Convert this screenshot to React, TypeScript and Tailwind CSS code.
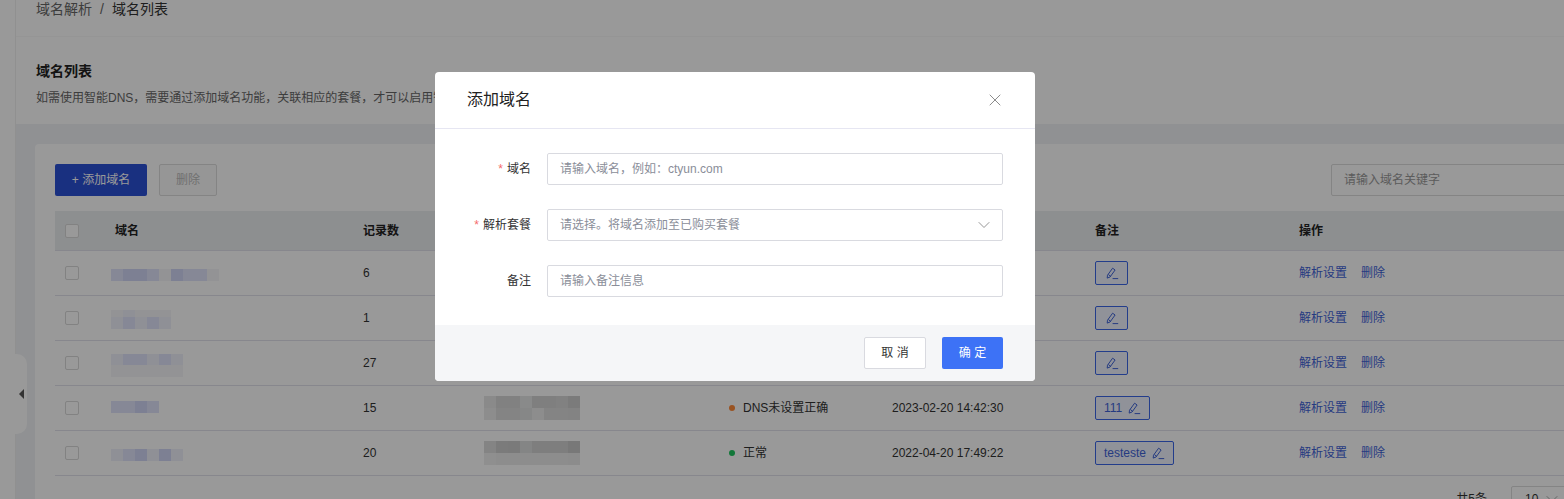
import { ChevronDown, X } from 'lucide-react';

interface Row {
  count: number;
  name: string[][];
  nameHeights: string[];
  nameOffset: string;
  pkg?: string[][];
  status?: { label: string; dot: string };
  time?: string;
  note?: string;
}

const L = '#eef0fa';
const M = '#dfe3fa';
const S = '#d0d6f5';
const P = '#f5f5f9';

const ROWS: Row[] = [
  {
    count: 6,
    name: [[M, S, S, M, P, S, M, M, P]],
    nameHeights: ['h-[12px]'],
    nameOffset: 'mt-[4px]',
  },
  {
    count: 1,
    name: [[P, L, P, P, P], [L, M, L, M, L]],
    nameHeights: ['h-[7px]', 'h-[12px]'],
    nameOffset: 'mt-[3px]',
  },
  {
    count: 27,
    name: [[L, M, M, L, M, L], [P, P, P, P, P, P]],
    nameHeights: ['h-[11px]', 'h-[12px]'],
    nameOffset: 'mt-[5px]',
  },
  {
    count: 15,
    name: [[M, M, S, M]],
    nameHeights: ['h-[12px]'],
    nameOffset: '-mt-[2px]',
    pkg: [
      ['#e6e6e6', '#d8d8d8', '#d8d8d8', '#e4e6e6', '#d4d4d4', '#d4d4d4', '#d8d8d8', '#cecece'],
      ['#ececec', '#dcdcdc', '#dcdcdc', '#dfe2e2', '#ebebeb', '#dcdcdc', '#dcdcdc', '#dadada'],
    ],
    status: { label: 'DNS未设置正确', dot: 'bg-[#ff8a3a]' },
    time: '2023-02-20 14:42:30',
    note: '111',
  },
  {
    count: 20,
    name: [[L, M, S, L, S, L]],
    nameHeights: ['h-[12px]'],
    nameOffset: 'mt-[4px]',
    pkg: [
      ['#dcdcdc', '#cdcdcd', '#cccccc', '#dcdede', '#d2d2d2', '#d2d2d2', '#d2d2d2', '#c8c8c8'],
      ['#eeeeee', '#ececec', '#ececec', '#ececec', '#ececec', '#ececec', '#ececec', '#eaeaea'],
    ],
    status: { label: '正常', dot: 'bg-[#1fc75f]' },
    time: '2022-04-20 17:49:22',
    note: 'testeste',
  },
];

const COLS = 'grid grid-cols-[56px_252px_121px_245px_163px_203px_204px_1fr] items-center';

function Mosaic({ rows, heights }: { rows: string[][]; heights: string[] }) {
  return (
    <div className="flex flex-col">
      {rows.map((cells, i) => (
        <div key={i} className={`flex ${heights[i]}`}>
          {cells.map((c, j) => (
            <div key={j} className="w-[12px] h-full" style={{ backgroundColor: c }} />
          ))}
        </div>
      ))}
    </div>
  );
}

function PencilLine() {
  return (
    <svg width="14" height="14" viewBox="0 0 14 14" fill="none" stroke="currentColor" strokeWidth="1">
      <path d="M2.5 9.2 7.6 2.2l2.5 1.8-5.1 7-2.8 1.1z" />
      <path d="M3.4 8.6l2.4 1.8" />
      <path d="M7.6 12.6h5.6" />
    </svg>
  );
}

function Checkbox() {
  return <div className="ml-[10px] w-[14px] h-[14px] rounded-[2px] border border-[#d9d9d9] bg-white" />;
}

function Field({ label, required, children }: { label: string; required?: boolean; children: React.ReactNode }) {
  return (
    <div className="flex items-center h-[32px]">
      <label className="w-[96px] text-right text-[12px] text-[#333]">
        {required && <span className="text-[#f56c6c] mr-[4px]">*</span>}
        {label}
      </label>
      <div className="ml-[16px] flex-1">{children}</div>
    </div>
  );
}

export default function App() {
  return (
    <div className="relative w-full h-[499px] overflow-hidden bg-[#f0f2f5] text-[12px] text-[#333] font-['Liberation_Sans','Noto_Sans_CJK_SC',sans-serif]">
      <div className="flex w-[1611px] h-full">
        <div className="w-[16px] shrink-0 bg-white border-r border-[#f0f0f0]" />

        <div className="flex-1">
          {/* Header */}
          <div className="bg-white">
            <div className="h-[37px] px-[20px] border-b border-[#f8f8f8] text-[14px] leading-[18px] flex gap-[8px]">
              <span className="text-[#666]">域名解析</span>
              <span className="text-[#666]">/</span>
              <span>域名列表</span>
            </div>
            <div className="h-[87px] px-[20px] pt-[25px]">
              <h1 className="text-[14px] leading-[18px] font-bold text-[#222]">域名列表</h1>
              <p className="mt-[9px] text-[12px] leading-[18px] text-[#666]">
                如需使用智能DNS，需要通过添加域名功能，关联相应的套餐，才可以启用智能DNS解析。
              </p>
            </div>
          </div>

          {/* List card */}
          <div className="mt-[20px] ml-[19px] mr-[20px] rounded-t-[4px] bg-white px-[20px] pt-[20px]">
            <div className="flex items-center h-[32px]">
              <button className="w-[92px] h-[32px] rounded-[2px] bg-[#2b50d6] text-white text-[12px]">+ 添加域名</button>
              <button className="ml-[12px] w-[58px] h-[32px] rounded-[2px] border border-[#dcdcdc] bg-[#fafafa] text-[#bbb] text-[12px]">删除</button>
              <input
                placeholder="请输入域名关键字"
                className="ml-auto w-[240px] h-[32px] rounded-[2px] border border-[#dcdcdc] px-[12px] text-[12px] placeholder:text-[#999]"
              />
            </div>

            <div className={`${COLS} mt-[15px] h-[40px] pt-[1px] bg-[#eceef1] border-b border-[#e2e2ec] font-bold text-[#222]`}>
              <Checkbox />
              <span className="pl-[4px]">域名</span>
              <span>记录数</span>
              <span />
              <span />
              <span />
              <span>备注</span>
              <span>操作</span>
            </div>

            {ROWS.map((r) => (
              <div key={r.count} className={`${COLS} h-[45px] border-b border-[#e2e2ec]`}>
                <Checkbox />
                <div className={r.nameOffset}>
                  <Mosaic rows={r.name} heights={r.nameHeights} />
                </div>
                <span>{r.count}</span>
                <div>{r.pkg && <Mosaic rows={r.pkg} heights={['h-[12px]', 'h-[12px]']} />}</div>
                <div className="flex items-center">
                  {r.status && (
                    <>
                      <span className={`w-[6px] h-[6px] rounded-full ${r.status.dot}`} />
                      <span className="ml-[8px]">{r.status.label}</span>
                    </>
                  )}
                </div>
                <span>{r.time}</span>
                <div>
                  <button className="inline-flex items-center gap-[5px] h-[24px] min-w-[33px] px-[8px] justify-center rounded-[2px] border border-[#3b66e8] bg-[#f0f4ff] text-[#3f63d8]">
                    {r.note && <span>{r.note}</span>}
                    <PencilLine />
                  </button>
                </div>
                <div className="flex gap-[14px] text-[#3f63d8]">
                  <span>解析设置</span>
                  <span>删除</span>
                </div>
              </div>
            ))}

            <div className="flex items-center justify-end mt-[10px] h-[26px]">
              <span>共5条</span>
              <div className="ml-[24px] w-[60px] h-[26px] rounded-[2px] border border-[#dcdcdc] pl-[13px] flex items-center gap-[4px]">
                <span>10</span>
                <ChevronDown size={20} strokeWidth={1} className="text-[#999]" />
              </div>
            </div>
          </div>
        </div>
      </div>

      {/* Sidebar collapse tab */}
      <div className="absolute left-[15px] top-[354px] w-[12px] h-[80px] rounded-r-[10px] bg-white flex items-center justify-end pr-[3px]">
        <svg width="5" height="10" viewBox="0 0 5 10">
          <path d="M5 0v10L0 5z" fill="#555" />
        </svg>
      </div>

      {/* Dialog */}
      <div className="absolute inset-0 bg-black/40">
        <div className="ml-[435px] mt-[72px] w-[600px] h-[309px] rounded-[4px] bg-white overflow-hidden flex flex-col">
          <div className="h-[57px] shrink-0 pl-[32px] pr-[30px] border-b border-[#e6e6f2] flex items-center justify-between">
            <h2 className="text-[16px] text-[#222] font-normal">添加域名</h2>
            <X size={20} strokeWidth={1.2} className="text-[#8c8c8c]" />
          </div>

          <div className="flex-1 pt-[24px] pr-[32px] flex flex-col gap-[24px]">
            <Field label="域名" required>
              <input
                placeholder="请输入域名，例如：ctyun.com"
                className="w-full h-[32px] rounded-[2px] border border-[#d9dae0] px-[12px] text-[12px] placeholder:text-[#8a8e99]"
              />
            </Field>
            <Field label="解析套餐" required>
              <div className="h-[32px] rounded-[2px] border border-[#d9dae0] pl-[12px] pr-[8px] flex items-center justify-between text-[#8a8e99]">
                <span>请选择。将域名添加至已购买套餐</span>
                <ChevronDown size={20} strokeWidth={1.1} className="text-[#8c8c8c]" />
              </div>
            </Field>
            <Field label="备注">
              <input
                placeholder="请输入备注信息"
                className="w-full h-[32px] rounded-[2px] border border-[#d9dae0] px-[12px] text-[12px] placeholder:text-[#8a8e99]"
              />
            </Field>
          </div>

          <div className="h-[56px] shrink-0 bg-[#f5f6f8] pr-[32px] flex items-center justify-end gap-[16px]">
            <button className="w-[62px] h-[32px] rounded-[2px] border border-[#d9dae0] bg-white text-[12px] text-[#333]">取 消</button>
            <button className="w-[61px] h-[32px] rounded-[2px] bg-[#3d72f6] text-[12px] text-white">确 定</button>
          </div>
        </div>
      </div>
    </div>
  );
}
